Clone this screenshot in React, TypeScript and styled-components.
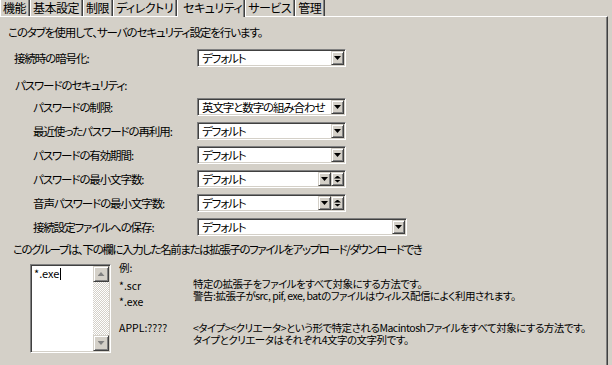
import React from 'react';
import styled, { createGlobalStyle, css } from 'styled-components';

const GlobalStyle = createGlobalStyle`
  html, body {
    margin: 0;
    padding: 0;
    background: #d4d0c8;
  }
  body {
    width: 612px;
    height: 365px;
    overflow: hidden;
    font-family: "Noto Sans CJK JP", "Noto Sans", sans-serif;
    font-size: 11.5px;
    letter-spacing: -1.1px;
    color: #000;
    font-feature-settings: "palt";
  }
`;

const Window = styled.div`
  width: 612px;
  height: 365px;
  display: flex;
  flex-direction: column;
  background: #d4d0c8;
`;

const TabStrip = styled.div`
  display: flex;
  height: 16px;
  position: relative;
  z-index: 1;
`;

const Tab = styled.div<{ $active?: boolean }>`
  height: 16px;
  box-sizing: border-box;
  padding: 0 3px 0 2px;
  border-left: 1px solid #fff;
  border-right: 1px solid #404040;
  box-shadow: inset -1px 0 #808080;
  font-size: 12px;
  letter-spacing: -0.5px;
  line-height: 16px;
  white-space: nowrap;
  background: #d4d0c8;

  ${p => p.$active && css`
    height: 17px;
    padding: 0 2px 0 5px;
    line-height: 16px;
  `}
`;

const Panel = styled.div`
  flex: 1;
  margin-right: 4px;
  border-top: 1px solid #fff;
  border-right: 1px solid #404040;
  box-shadow: inset -1px 0 #808080;
  display: flex;
  flex-direction: column;
  padding-top: 8px;
`;

const Text = styled.div<{ $indent: number; $gap?: number; $spacing?: number }>`
  padding-left: ${p => p.$indent}px;
  margin-top: ${p => p.$gap ?? 0}px;
  letter-spacing: ${p => p.$spacing ?? -1.1}px;
  line-height: 14px;
  white-space: nowrap;
`;

const FieldRow = styled.div<{ $indent: number; $gap: number }>`
  display: grid;
  grid-template-columns: ${p => 197 - p.$indent}px max-content;
  align-items: center;
  padding-left: ${p => p.$indent}px;
  margin-top: ${p => p.$gap}px;
  height: 18px;
  white-space: nowrap;
`;

const Combo = styled.div<{ $width: number }>`
  width: ${p => p.$width}px;
  height: 18px;
  box-sizing: border-box;
  background: #fff;
  border: 1px solid;
  border-color: #808080 #fff #fff #808080;
  box-shadow: inset 1px 1px #404040, inset -1px -1px #d4d0c8;
  padding: 1px;
  display: flex;
`;

const ComboValue = styled.div`
  flex: 1;
  padding-left: 3px;
  line-height: 14px;
  overflow: hidden;
  white-space: nowrap;
`;

const RaisedButton = styled.div`
  width: 13px;
  height: 14px;
  box-sizing: border-box;
  background: #d4d0c8;
  border: 1px solid;
  border-color: #d4d0c8 #404040 #404040 #d4d0c8;
  box-shadow: inset 1px 1px #fff, inset -1px -1px #808080;
  display: flex;
  flex-direction: column;
  align-items: center;
  justify-content: center;
  gap: 1px;
  flex-shrink: 0;
`;

const Arrow = styled.span<{ $up?: boolean; $w?: number; $h?: number; $color?: string }>`
  display: block;
  width: ${p => p.$w ?? 7}px;
  height: ${p => p.$h ?? 4}px;
  background: ${p => p.$color ?? '#000'};
  clip-path: ${p => p.$up
    ? 'polygon(50% 0, 100% 100%, 0 100%)'
    : 'polygon(0 0, 100% 0, 50% 100%)'};
`;

const GroupArea = styled.div`
  display: flex;
  margin-top: 8px;
  padding-left: 30px;
  gap: 8px;
`;

const ListBox = styled.div`
  width: 81px;
  height: 89px;
  flex-shrink: 0;
  box-sizing: border-box;
  background: #fff;
  border: 1px solid;
  border-color: #808080 #fff #fff #808080;
  box-shadow: inset 1px 1px #404040, inset -1px -1px #d4d0c8;
  padding: 1px;
  display: flex;
`;

const ListText = styled.div`
  flex: 1;
  padding: 1px 2px;
  line-height: 13px;
  font-size: 11px;
  letter-spacing: 0;
`;

const Caret = styled.span`
  display: inline-block;
  width: 1px;
  height: 12px;
  background: #000;
  vertical-align: -2px;
  margin-left: 1px;
`;

const ScrollBar = styled.div`
  width: 16px;
  display: flex;
  flex-direction: column;
  justify-content: space-between;
  background: repeating-conic-gradient(#fff 0 25%, #d4d0c8 0 50%) 0 0 / 2px 2px;
`;

const ScrollButton = styled(RaisedButton)`
  width: 16px;
  height: 16px;
`;

const Examples = styled.div`
  display: grid;
  grid-template-columns: 74px max-content;
  grid-template-rows: 16px 44px auto;
  margin-top: -2px;
  font-size: 10.5px;
  letter-spacing: -0.5px;
  line-height: 12px;
  white-space: nowrap;
`;

const ExampleKeys = styled.div`
  display: flex;
  flex-direction: column;
  gap: 4px;
  padding-top: 2px;
  line-height: 12px;
  letter-spacing: 0;
`;

const Key = styled.span`
  letter-spacing: 0;
`;

const fields = [
  { label: 'パスワードの制限:', value: '英文字と数字の組み合わせ', spin: false },
  { label: '最近使ったパスワードの再利用:', value: 'デフォルト', spin: false },
  { label: 'パスワードの有効期間:', value: 'デフォルト', spin: false },
  { label: 'パスワードの最小文字数:', value: 'デフォルト', spin: true },
  { label: '音声パスワードの最小文字数:', value: 'デフォルト', spin: true },
];

const tabs = ['機能', '基本設定', '制限', 'ディレクトリ', 'セキュリティ', 'サービス', '管理'];

const ComboBox = ({ value, width, spin }: { value: string; width: number; spin?: boolean }) => (
  <Combo $width={width}>
    <ComboValue>{value}</ComboValue>
    <RaisedButton><Arrow /></RaisedButton>
    {spin && (
      <RaisedButton>
        <Arrow $up $h={3} />
        <Arrow $h={3} />
      </RaisedButton>
    )}
  </Combo>
);

export default function App() {
  return (
    <Window>
      <GlobalStyle />
      <TabStrip>
        {tabs.map(t => <Tab key={t} $active={t === 'セキュリティ'}>{t}</Tab>)}
      </TabStrip>
      <Panel>
        <Text $indent={8}>このタブを使用して、サーバのセキュリティ設定を行います。</Text>
        <FieldRow $indent={14} $gap={10}>
          <span>接続時の暗号化:</span>
          <ComboBox value="デフォルト" width={149} />
        </FieldRow>
        <Text $indent={15} $gap={11}>パスワードのセキュリティ:</Text>
        {fields.map(f => (
          <FieldRow key={f.label} $indent={33} $gap={6}>
            <span>{f.label}</span>
            <ComboBox value={f.value} width={149} spin={f.spin} />
          </FieldRow>
        ))}
        <FieldRow $indent={33} $gap={6}>
          <span>接続設定ファイルへの保存:</span>
          <ComboBox value="デフォルト" width={210} />
        </FieldRow>
        <Text $indent={13} $gap={6} $spacing={-1.4}>このグループは、下の欄に入力した名前または拡張子のファイルをアップロード/ダウンロードでき</Text>
        <GroupArea>
          <ListBox>
            <ListText>*.exe<Caret /></ListText>
            <ScrollBar>
              <ScrollButton><Arrow $up $color="#808080" /></ScrollButton>
              <ScrollButton><Arrow $color="#808080" /></ScrollButton>
            </ScrollBar>
          </ListBox>
          <Examples>
            <Key>例:</Key>
            <span />
            <ExampleKeys>
              <span>*.scr</span>
              <span>*.exe</span>
            </ExampleKeys>
            <div>
              特定の拡張子をファイルをすべて対象にする方法です。<br />
              警告:拡張子がsrc, pif, exe, batのファイルはウィルス配信によく利用されます。
            </div>
            <Key>APPL:????</Key>
            <div>
              &lt;タイプ&gt;&lt;クリエータ&gt;という形で特定されるMacintoshファイルをすべて対象にする方法です。<br />
              タイプとクリエータはそれぞれ4文字の文字列です。
            </div>
          </Examples>
        </GroupArea>
      </Panel>
    </Window>
  );
}
